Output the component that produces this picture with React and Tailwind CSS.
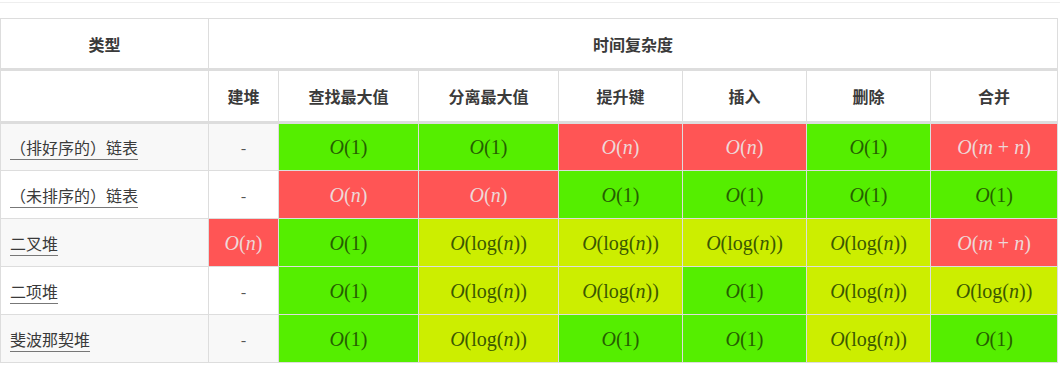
import React from 'react';

const G = 'bg-[#55ee00] text-[#255e00]';
const R = 'bg-[#ff5555] text-[#eed8d8]';
const Y = 'bg-[#ccee00] text-[#3b5800]';

// little math renderer: O(...) in a serif face
const I = ({ children }) => <span className="italic">{children}</span>;

const mathOf = (k) => {
  switch (k) {
    case '1':
      return <><I>O</I>(1)</>;
    case 'n':
      return <><I>O</I>(<I>n</I>)</>;
    case 'log':
      return <><I>O</I>(log(<I>n</I>))</>;
    case 'mn':
      return <><I>O</I>(<I>m</I><span className="mx-[5px]">+</span><I>n</I>)</>;
    default:
      return '-';
  }
};

const rows = [
  { label: '（排好序的）链表', build: null, cells: [['1', G], ['1', G], ['n', R], ['n', R], ['1', G], ['mn', R]] },
  { label: '（未排序的）链表', build: null, cells: [['n', R], ['n', R], ['1', G], ['1', G], ['1', G], ['1', G]] },
  { label: '二叉堆', build: ['n', R], cells: [['1', G], ['log', Y], ['log', Y], ['log', Y], ['log', Y], ['mn', R]] },
  { label: '二项堆', build: null, cells: [['1', G], ['log', Y], ['log', Y], ['1', G], ['log', Y], ['log', Y]] },
  { label: '斐波那契堆', build: null, cells: [['1', G], ['log', Y], ['1', G], ['1', G], ['log', Y], ['1', G]] },
];

const ops = ['建堆', '查找最大值', '分离最大值', '提升键', '插入', '删除', '合并'];
const widths = [208, 70, 140, 140, 124, 124, 124, 127];

const cjk = "font-['Noto_Sans_CJK_SC','Noto_Sans',sans-serif]";
const serif = "font-['Liberation_Serif','DejaVu_Serif',serif]";

export default function App() {
  return (
    <div className="w-[1060px] h-[365px] bg-white overflow-hidden">
      <div className="mt-[2px] border-t border-[#eeeeee]" />
      <table className={`mt-[15px] w-[1057px] table-fixed border-collapse text-[16px] text-[#333] ${cjk}`}>
        <colgroup>
          {widths.map((w, i) => (
            <col key={i} style={{ width: w }} />
          ))}
        </colgroup>
        <thead>
          <tr className="h-[51px]">
            <th className="border border-[#dddddd] border-b-[3px] font-bold text-center text-[#3a3a3a]">类型</th>
            <th colSpan={7} className="border border-[#dddddd] border-b-[3px] font-bold text-center text-[#3a3a3a]">时间复杂度</th>
          </tr>
          <tr className="h-[53px]">
            <th className="border border-[#dddddd] border-b-[3px]"></th>
            {ops.map((o) => (
              <th key={o} className="border border-[#dddddd] border-b-[3px] font-bold text-center text-[#3a3a3a]">{o}</th>
            ))}
          </tr>
        </thead>
        <tbody>
          {rows.map((r, i) => {
            const stripe = i % 2 === 0 ? 'bg-[#f8f8f8]' : 'bg-white';
            return (
              <tr key={r.label} className="h-[48px]">
                <td className={`border border-[#dddddd] px-[9px] ${stripe}`}>
                  <span className="underline decoration-[#777] underline-offset-[5px] text-[#3a3a3a]">{r.label}</span>
                </td>
                {r.build ? (
                  <td className={`border border-[#dddddd] text-center text-[20px] ${serif} ${r.build[1]}`}>{mathOf(r.build[0])}</td>
                ) : (
                  <td className={`border border-[#dddddd] text-center text-[#555] ${stripe}`}>-</td>
                )}
                {r.cells.map(([k, c], j) => (
                  <td key={j} className={`border border-[#dddddd] text-center text-[20px] ${serif} ${c}`}>
                    {mathOf(k)}
                  </td>
                ))}
              </tr>
            );
          })}
        </tbody>
      </table>
    </div>
  );
}
